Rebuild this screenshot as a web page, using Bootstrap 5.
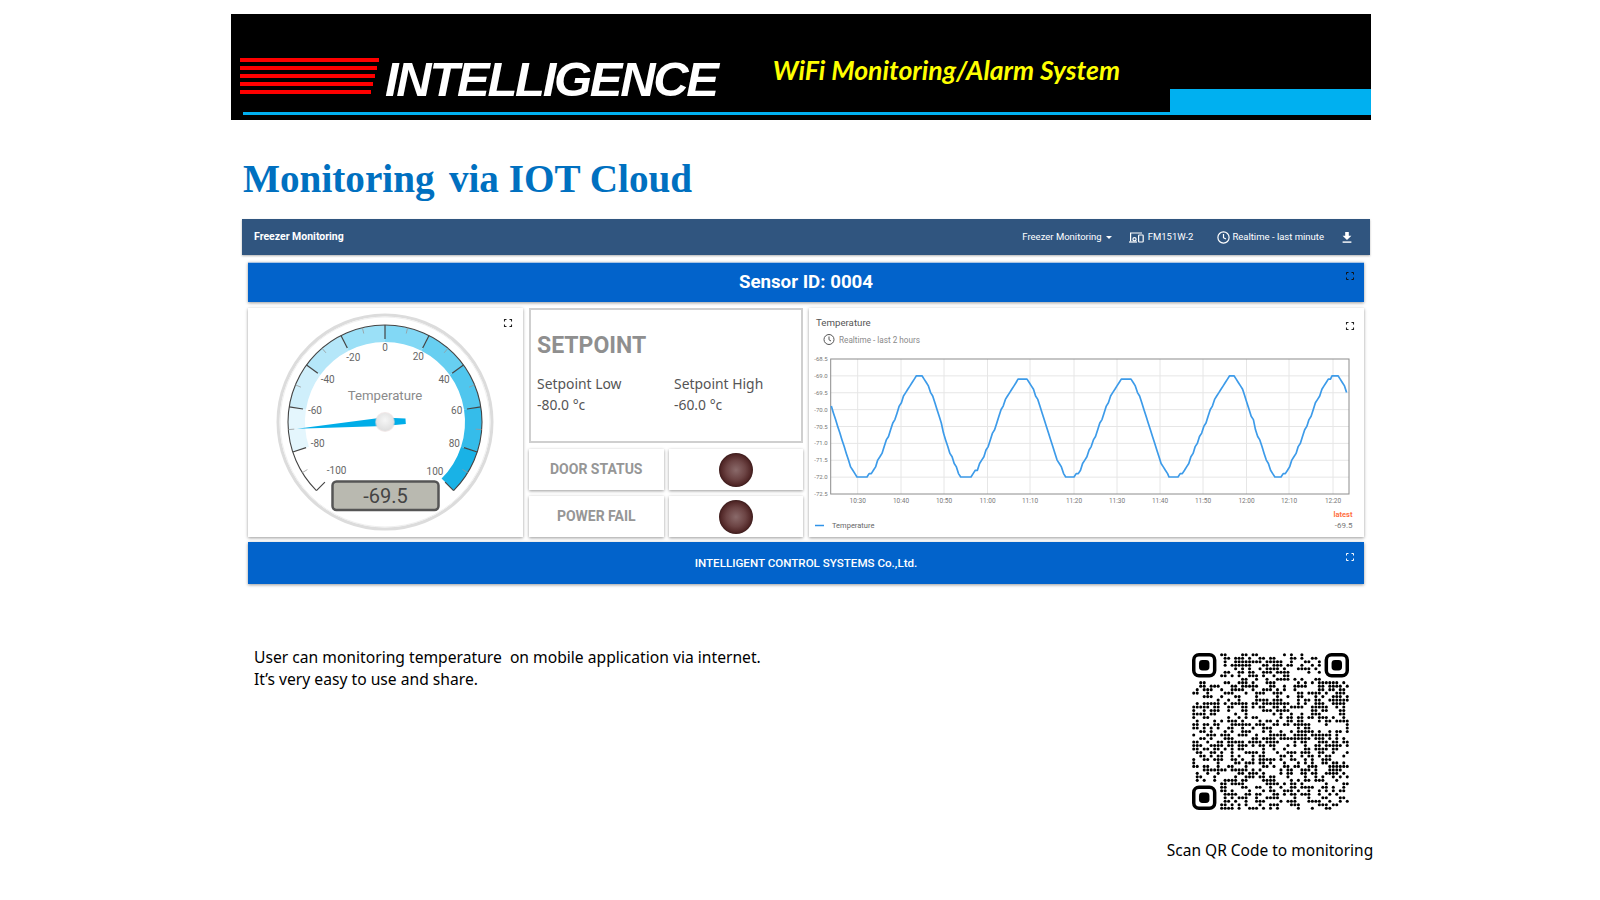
<!doctype html>
<html lang="en">
<head>
<meta charset="utf-8">
<title>Intelligence WiFi Monitoring</title>
<link href="https://cdn.jsdelivr.net/npm/bootstrap@5.3.0/dist/css/bootstrap.min.css" rel="stylesheet">
<style>
body{background:#fff;font-family:"Noto Sans",sans-serif;color:#000;overflow:hidden}
.slide-wrap{width:1140px;margin:14px 0 0 231px}
.brand-banner{background:#000;height:106px;padding-bottom:5px}
.brand-main{width:939px}
.brand-row{height:98px;padding-left:9px}
.stripes{width:139px;margin-top:44px;gap:4px}
.stripes span{display:block;height:4px;background:#f00}
.brand-name{font:italic 700 49px/1 "Liberation Sans",sans-serif;color:#fff;letter-spacing:-2.3px;margin:41px 0 0 6px}
.brand-tag{font:italic 700 26.6px/1 Lato,sans-serif;color:#ff0;margin:43px 0 0 56px;white-space:nowrap}
.brand-line{height:3px;margin-left:12px;background:#00b0f0}
.brand-block{width:201px;height:26px;background:#00b0f0}
.page-title{font:700 39.2px/39px "Liberation Serif",serif;color:#0070c0;margin:39px 0 21px 12px;white-space:pre}
.title-gap{margin-right:4.5px}
.dash{margin-left:11px;width:1128px;font-family:Roboto,sans-serif}
.dash-nav{background:#30557f;height:36px;padding:0 18px 0 12px;box-shadow:0 1px 2px rgba(0,0,0,.3);color:#fff;font-size:9.5px;flex-wrap:nowrap}
.dash-brand{font-size:10.5px;font-weight:700}
.dash-item{gap:4px;white-space:nowrap}
.clock-item{gap:2px;margin-left:24px}
.caret-mark{width:0;height:0;border:3px solid transparent;border-top-color:#fff;border-bottom:0;margin-left:0}
.dash-body{padding:7px 6px 0 6px}
.blue-panel{background:#0263cb;color:#fff;border:0;border-radius:0;box-shadow:0 1px 3px rgba(0,0,0,.4)}
.sensor-panel{height:40px;font-size:18.7px;font-weight:700;border-top:1px solid #a9c4e4}
.footer-panel{height:42px;font-size:11.6px;font-weight:500;margin-top:5px;padding-top:1px}
.expand-mark{position:absolute;right:10px;top:9px}
.footer-panel .expand-mark{top:11px}
.panel-row{gap:6px;margin-top:6px;height:229px}
.white-panel{background:#fff;border:0;border-radius:0;box-shadow:0 1px 3px rgba(0,0,0,.4)}
.gauge-panel{width:275px}
.mid-col{width:274px;gap:6px}
.setpoint-panel{height:135px;border:2px solid #cfcfcf;border-radius:0;padding:23px 6px 0 6px;font-family:"Noto Sans",sans-serif;color:#555;font-size:13.9px;line-height:21px;background:#fff}
.setpoint-head{font:700 23px/26px Roboto,sans-serif;color:#8f8f8f;margin-bottom:14px}
.setpoint-col{flex:0 0 137px}
.setpoint-col2{flex:1 1 0}
.status-row{gap:5px;height:41px}
.status-cell{flex:1 1 0;font-size:14px;font-weight:700;color:#969696}
.led-dot{width:34px;height:34px;border-radius:50%;background:radial-gradient(circle,#8a6a6a 0,#6c4444 40%,#522828 62%,#1e0a0a 82%,#1a0808 88%,rgba(40,10,10,0) 100%)}
.chart-panel{width:555px}
.chart-panel svg,.gauge-panel svg{display:block}
.info-row{margin:62px 0 0 23px;width:1117px}
.info-text{font-size:15.65px;line-height:22px;white-space:pre}
.qr-col{width:210px;margin:7px -4px 0 0}
.qr-caption{font-size:15.5px;line-height:20px;margin-top:30px;white-space:nowrap}
</style>
</head>
<body>
<div class="slide-wrap">
  <div class="brand-banner d-flex">
    <div class="brand-main d-flex flex-column">
      <div class="brand-row d-flex align-items-start">
        <div class="stripes d-flex flex-column">
          <span style="width:139px"></span><span style="width:137px"></span><span style="width:135px"></span><span style="width:133px"></span><span style="width:131px"></span>
        </div>
        <div class="brand-name">INTELLIGENCE</div>
        <div class="brand-tag">WiFi Monitoring/Alarm System</div>
      </div>
      <div class="brand-line"></div>
    </div>
    <div class="brand-block align-self-end"></div>
  </div>

  <h1 class="page-title"><span class="title-gap">Monitoring</span> via IOT Cloud</h1>

  <div class="dash">
    <nav class="navbar dash-nav d-flex justify-content-between align-items-center">
      <span class="dash-brand">Freezer Monitoring</span>
      <div class="d-flex align-items-center">
        <span class="dash-item d-flex align-items-center">Freezer Monitoring<span class="caret-mark"></span></span>
        <span class="dash-item d-flex align-items-center" style="margin-left:17px">
          <svg width="15" height="11" viewBox="0 0 15 11" fill="none" stroke="#fff" stroke-width="1.2"><path d="M13 1H1.6v8.4"/><path d="M0 10h8"/><rect x="9.6" y="3" width="4.6" height="7" rx=".8"/><circle cx="5.5" cy="7.2" r="1.6"/></svg>
          FM151W-2</span>
        <span class="dash-item clock-item d-flex align-items-center">
          <svg width="13" height="13" viewBox="0 0 13 13" fill="none" stroke="#fff" stroke-width="1.2"><circle cx="6.5" cy="6.5" r="5.6"/><path d="M6.5 3v3.7l2.4 1.4"/></svg>
          Realtime - last minute</span>
        <svg style="margin-left:18px" width="10" height="11" viewBox="0 0 10 11" fill="#fff"><path d="M3.2 0h3.6v3.8H9.400L5 8 .6 3.800h2.600z"/><rect x=".6" y="9.400" width="8.800" height="1.400"/></svg>
      </div>
    </nav>
    <div class="dash-body">
      <div class="blue-panel sensor-panel card position-relative d-flex align-items-center justify-content-center">Sensor ID: 0004
        <svg class="expand-mark" width="8" height="8" viewBox="0 0 8 8" fill="none" stroke="#111" stroke-width="1"><path d="M.5 2.500v-2h2M5.500.5h2v2M7.500 5.500v2h-2M2.500 7.500h-2v-2"/></svg>
      </div>
      <div class="panel-row d-flex">
        <div class="white-panel gauge-panel card"><svg id="gauge" width="275" height="229" viewBox="248 308 275 229"></svg></div>
        <div class="mid-col d-flex flex-column">
          <div class="setpoint-panel">
            <div class="setpoint-head">SETPOINT</div>
            <div class="d-flex">
              <div class="setpoint-col">Setpoint Low<br>-80.0 °c</div>
              <div class="setpoint-col2">Setpoint High<br>-60.0 °c</div>
            </div>
          </div>
          <div class="status-row d-flex">
            <div class="white-panel status-cell card align-items-center justify-content-center">DOOR STATUS</div>
            <div class="white-panel status-cell card align-items-center justify-content-center"><div class="led-dot"></div></div>
          </div>
          <div class="status-row d-flex">
            <div class="white-panel status-cell card align-items-center justify-content-center">POWER FAIL</div>
            <div class="white-panel status-cell card align-items-center justify-content-center"><div class="led-dot"></div></div>
          </div>
        </div>
        <div class="white-panel chart-panel card"><svg id="chart" width="555" height="229" viewBox="809 308 555 229"></svg></div>
      </div>
      <div class="blue-panel footer-panel card position-relative d-flex align-items-center justify-content-center">INTELLIGENT CONTROL SYSTEMS Co.,Ltd.
        <svg class="expand-mark" width="8" height="8" viewBox="0 0 8 8" fill="none" stroke="#fff" stroke-width="1"><path d="M.5 2.500v-2h2M5.500.5h2v2M7.500 5.500v2h-2M2.500 7.500h-2v-2"/></svg>
      </div>
    </div>
  </div>

  <div class="info-row d-flex justify-content-between align-items-start">
    <div class="info-text">User can monitoring temperature  on mobile application via internet.
It’s very easy to use and share.</div>
    <div class="qr-col d-flex flex-column align-items-center">
      <svg id="qr" width="157" height="157" viewBox="0 0 45 45"></svg>
      <div class="qr-caption">Scan QR Code to monitoring</div>
    </div>
  </div>
</div>

<script src="https://cdn.jsdelivr.net/npm/bootstrap@5.3.0/dist/js/bootstrap.bundle.min.js"></script>
<script>
(function(){
  /* gauge */
  var cx=385,cy=422,s='';
  function pt(v,r){var a=v*1.35*Math.PI/180;return [cx+r*Math.sin(a),cy-r*Math.cos(a)];}
  function f(p){return p[0].toFixed(2)+' '+p[1].toFixed(2);}
  s+='<defs><radialGradient id="hubg" cx=".5" cy=".4" r=".6"><stop offset="0" stop-color="#f6f6f6"/><stop offset="1" stop-color="#dedede"/></radialGradient></defs>';
  s+='<circle cx="'+cx+'" cy="'+cy+'" r="107" fill="#fff" stroke="#dcdcdc" stroke-width="3"/>';
  s+='<circle cx="'+cx+'" cy="'+cy+'" r="105" fill="none" stroke="#efefef" stroke-width="1"/>';
  var cols=['#e4f6fd','#cfeffb','#b5e7f9','#9be0f7','#82d8f5','#67cff1','#50c6ee','#35bcea','#19b2e6'];
  cols.forEach(function(c,i){
    var a=-80+i*20,b=a+20;
    s+='<path fill="'+c+'" d="M'+f(pt(a,97))+'A97 97 0 0 1 '+f(pt(b,97))+'L'+f(pt(b,80))+'A80 80 0 0 0 '+f(pt(a,80))+'Z"/>';
  });
  s+='<path fill="none" stroke="#444" stroke-width="1.1" d="M'+f(pt(-100,97))+'A97 97 0 1 1 '+f(pt(100,97))+'"/>';
  for(var v=-100;v<=100;v+=10){
    var maj=v%20===0;
    var inner=maj?(v===100||v===-100?85:83):91;
    s+='<path stroke="'+(maj?'#444':'#999')+'" stroke-width="'+(maj?1.2:.8)+'" d="M'+f(pt(v,97))+'L'+f(pt(v,inner))+'"/>';
  }
  var labs=[['0',435,142],['20',535,170],['40',612,237],['60',650,330],['80',643,430],['100',585,514],['-20',340,173],['-40',263,239],['-60',225,330],['-80',233,430],['-100',290,511]];
  labs.forEach(function(l){
    s+='<text x="'+(240+l[1]/3)+'" y="'+(303.5+l[2]/3)+'" text-anchor="middle" font-family="Roboto,sans-serif" font-size="10" fill="#666">'+l[0]+'</text>';
  });
  s+='<text x="385" y="400" text-anchor="middle" font-family="Roboto,sans-serif" font-size="13.2" fill="#8a8a8a">Temperature</text>';
  s+='<polygon fill="#00ade8" points="297,428.800 383,417.600 405.500,418.600 405.800,424 384,426"/>';
  s+='<circle cx="385" cy="422" r="10" fill="#e8d8d8" opacity=".6"/><circle cx="385" cy="422" r="9" fill="url(#hubg)"/>';
  s+='<rect x="332.500" y="481.500" width="106" height="28.500" rx="4" fill="#b9b9b0" stroke="#555" stroke-width="2.500"/>';
  s+='<text x="385.500" y="502.500" text-anchor="middle" font-family="Roboto,sans-serif" font-size="20" fill="#444">-69.5</text>';
  s+='<g transform="translate(504 319)" fill="none" stroke="#222" stroke-width="1.100"><path d="M.5 2.500v-2h2M5.500.5h2v2M7.500 5.500v2h-2M2.500 7.500h-2v-2"/></g>';
  document.getElementById('gauge').innerHTML=s;

  /* chart */
  var L=830.7,R=1349,T=359,B=494,c='';
  var dy=(B-T)/8,ylab=['-68.5','-69.0','-69.5','-70.0','-70.5','-71.0','-71.5','-72.0','-72.5'];
  var xt=[857.7,901,944,987.500,1030,1074,1117,1160,1203,1246.500,1289,1333],xl=['10:30','10:40','10:50','11:00','11:10','11:20','11:30','11:40','11:50','12:00','12:10','12:20'];
  c+='<text x="816" y="326" font-family="Roboto,sans-serif" font-size="9.700" fill="#555">Temperature</text>';
  c+='<g fill="none" stroke="#555" stroke-width="1"><circle cx="829" cy="339.500" r="5"/><path d="M829 336.500v3.300l2 1.200"/></g>';
  c+='<text x="839" y="342.500" font-family="Roboto,sans-serif" font-size="8.200" fill="#8a8a8a">Realtime - last 2 hours</text>';
  c+='<g transform="translate(1346 322)" fill="none" stroke="#222" stroke-width="1.100"><path d="M.5 2.500v-2h2M5.500.5h2v2M7.500 5.500v2h-2M2.500 7.500h-2v-2"/></g>';
  for(var i=0;i<9;i++){
    var y=T+i*dy;
    if(i>0&&i<8)c+='<path stroke="#e6e6e6" d="M'+L+' '+y+'H'+R+'"/>';
    c+='<text x="'+(L-3)+'" y="'+(y+2)+'" text-anchor="end" font-family="Roboto,sans-serif" font-size="6" fill="#777">'+ylab[i]+'</text>';
  }
  xt.forEach(function(x,i){
    c+='<path stroke="#e6e6e6" d="M'+x+' '+T+'V'+B+'"/>';
    c+='<text x="'+x+'" y="503" text-anchor="middle" font-family="Roboto,sans-serif" font-size="6.500" fill="#777">'+xl[i]+'</text>';
  });
  c+='<rect x="'+L+'" y="'+T+'" width="'+(R-L)+'" height="'+(B-T)+'" fill="none" stroke="#8c8c8c"/>';
  var wp=[[818.4,376],[857,477],[867,477],[917,376],[922,376],[962,477],[971,477],[1018,380],[1027,380],[1067,477],[1074,477],[1122,380],[1131,380],[1169,477],[1178,477],[1230,376],[1234,376],[1276,477],[1281,477],[1332,376],[1338,376],[1378,477]];
  var d='',first=true,step=dy/5;
  for(var k=0;k<wp.length-1;k++){
    var a=wp[k],b=wp[k+1];
    for(var x=a[0];x<b[0];x+=2.15){
      if(x<L||x>R-1)continue;
      var t=(x-a[0])/(b[0]-a[0]);
      var e=.55*(1-Math.cos(Math.PI*t))/2+.45*t;
      var yy=a[1]===b[1]?a[1]:a[1]+(b[1]-a[1])*e;
      yy=477-Math.round((477-yy)/step)*step;
      d+=(first?'M':'L')+x.toFixed(1)+' '+yy.toFixed(1);first=false;
    }
  }
  c+='<path d="'+d+'" fill="none" stroke="#3d9be9" stroke-width="1.700" stroke-linejoin="round"/>';
  c+='<path d="M815 525.500h9" stroke="#2f93e8" stroke-width="1.500"/>';
  c+='<text x="832" y="528" font-family="Roboto,sans-serif" font-size="7.500" fill="#666">Temperature</text>';
  c+='<text x="1352.500" y="517" text-anchor="end" font-family="Roboto,sans-serif" font-size="7.500" font-weight="700" fill="#ff7043">latest</text>';
  c+='<text x="1352.500" y="528" text-anchor="end" font-family="Roboto,sans-serif" font-size="8" fill="#777">-69.5</text>';
  document.getElementById('chart').innerHTML=c;

  /* QR */
  var q='',seed=20483;
  function rnd(){seed=(seed*1664525+1013904223)>>>0;return (seed>>>16&0xffff)/65536;}
  function fnd(x,y){
    q+='<rect x="'+(x+.5)+'" y="'+(y+.5)+'" width="6" height="6" rx="1.500" fill="none" stroke="#000"/>';
    q+='<rect x="'+(x+2)+'" y="'+(y+2)+'" width="3" height="3" rx="1" fill="#000"/>';
  }
  fnd(0,0);fnd(38,0);fnd(0,38);
  for(var yq=0;yq<45;yq++)for(var xq=0;xq<45;xq++){
    if((xq<8&&yq<8)||(xq>36&&yq<8)||(xq<8&&yq>36)){continue;}
    if(rnd()<.48)q+='<circle cx="'+(xq+.5)+'" cy="'+(yq+.5)+'" r=".44"/>';
  }
  document.getElementById('qr').innerHTML=q;
})();
</script>
</body>
</html>
